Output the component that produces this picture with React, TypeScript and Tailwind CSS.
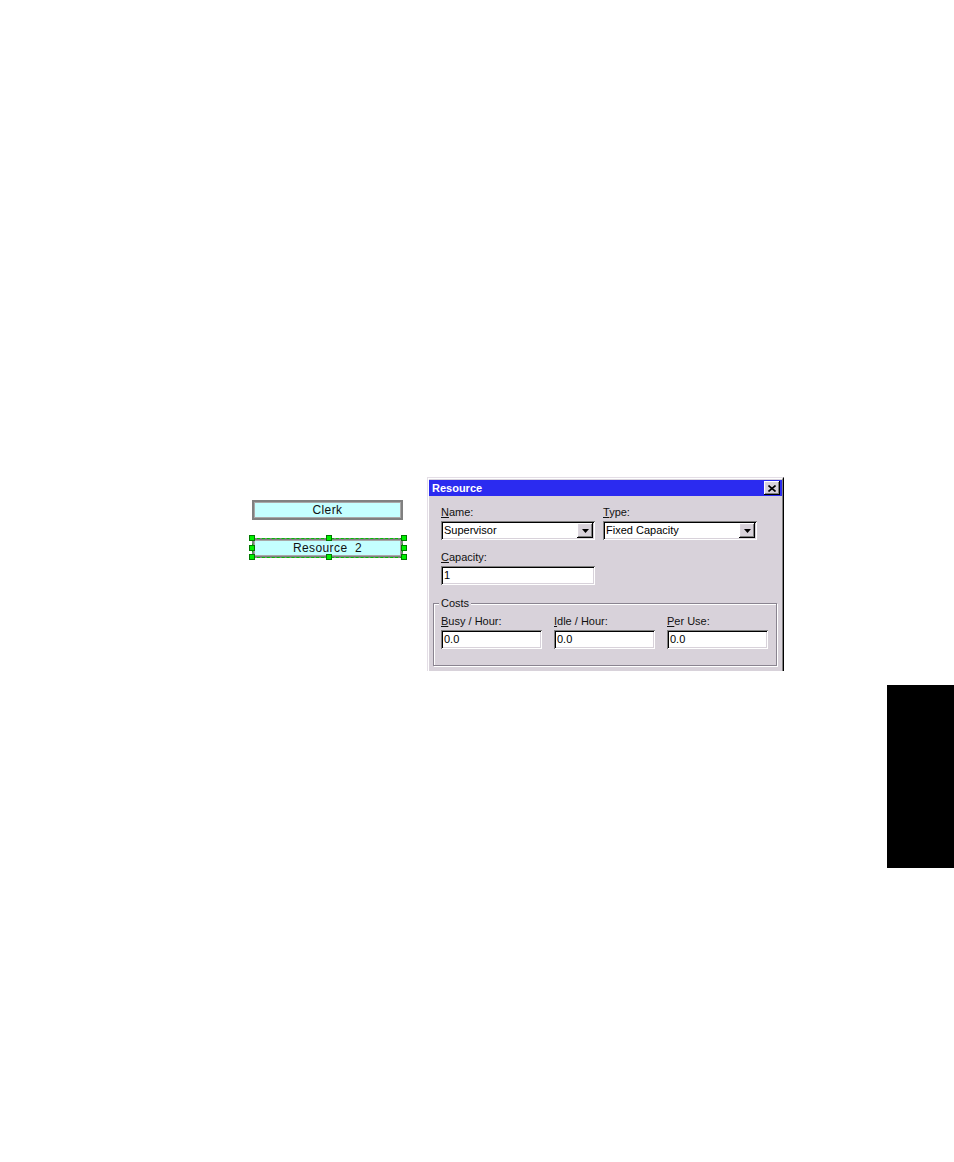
import React from "react";

const sunken =
  "shadow-[inset_1px_1px_0_#808080,inset_-1px_-1px_0_#ffffff,inset_2px_2px_0_#000000,inset_-2px_-2px_0_#d8d2da]";
const raised =
  "shadow-[inset_-1px_-1px_0_#000000,inset_1px_1px_0_#ffffff,inset_-2px_-2px_0_#808080,inset_2px_2px_0_#dcd6de]";

function Label({ u, rest }: { u: string; rest: string }) {
  return (
    <div className="h-[13px] leading-[13px] text-[11px] text-[#111] mb-[2px] whitespace-nowrap">
      <span className="underline underline-offset-[1px]">{u}</span>
      {rest}
    </div>
  );
}

function Field({ value, w, combo }: { value: string; w: string; combo?: boolean }) {
  return (
    <div className={`${w} h-[19px] bg-white ${sunken} flex items-center pl-[3px] text-[11px] text-black`}>
      <span className="leading-[13px] whitespace-nowrap">{value}</span>
      {combo && (
        <div className={`ml-auto mr-[2px] w-[16px] h-[15px] bg-[#d8d2da] ${raised} flex items-center justify-center`}>
          <svg width="7" height="4" viewBox="0 0 7 4">
            <polygon points="0,0 7,0 3.5,4" fill="#000" />
          </svg>
        </div>
      )}
    </div>
  );
}

function Handle({ x, y }: { x: number; y: number }) {
  return (
    <div
      className="absolute w-[6px] h-[6px] bg-[#00f000] border border-[#007a00]"
      style={{ left: x, top: y }}
    />
  );
}

const node =
  "w-[151px] h-[20px] bg-[#c4ffff] border-2 border-[#808080] shadow-[inset_0_0_0_1px_#a8a8a8] flex items-center justify-center text-[12px] text-[#111] tracking-[0.4px]";

export default function App() {
  return (
    <div
      className="relative w-[954px] h-[1162px] bg-white overflow-hidden"
      style={{ fontFamily: '"Liberation Sans", Arial, sans-serif' }}
    >
      <div className="pt-[477px] flex items-start">
        {/* diagram canvas */}
        <div className="ml-[252px] mt-[23px] flex flex-col gap-[18px]">
          <div className={node}>Clerk</div>
          <div className="relative">
            <div className={node}>Resource&nbsp;&nbsp;2</div>
            <div className="absolute inset-0 border border-dashed border-[#00c000]" />
            <Handle x={-3} y={-3} />
            <Handle x={74} y={-3} />
            <Handle x={149} y={-3} />
            <Handle x={-3} y={7} />
            <Handle x={149} y={7} />
            <Handle x={-3} y={16} />
            <Handle x={74} y={16} />
            <Handle x={149} y={16} />
          </div>
        </div>

        {/* dialog */}
        <div className="ml-[24px] w-[357px] h-[194px] border-l border-t border-[#e4dee6] border-r border-r-black bg-[#d8d2da]">
          <div className="h-full border-l border-t border-white border-r border-r-[#808080] pt-[1px]">
            <div className="h-[16px] bg-[#2b2bf0] flex items-center pl-[3px] pr-[2px]">
              <span className="text-[11px] font-bold text-white leading-[13px]">Resource</span>
              <div className={`ml-auto w-[16px] h-[14px] bg-[#d8d2da] ${raised} flex items-center justify-center`}>
                <svg width="8" height="7" viewBox="0 0 8 7">
                  <path d="M0.5 0.5 L7.5 6.5 M7.5 0.5 L0.5 6.5" stroke="#000" strokeWidth="1.6" />
                </svg>
              </div>
            </div>

            <div className="pl-[12px] pt-[10px]">
              <div className="flex gap-[8px]">
                <div>
                  <Label u="N" rest="ame:" />
                  <Field value="Supervisor" w="w-[154px]" combo />
                </div>
                <div>
                  <Label u="T" rest="ype:" />
                  <Field value="Fixed Capacity" w="w-[154px]" combo />
                </div>
              </div>
              <div className="mt-[11px]">
                <Label u="C" rest="apacity:" />
                <Field value="1" w="w-[154px]" />
              </div>
            </div>

            <div className="relative ml-[4px] mt-[18px] w-[344px] h-[63px] border border-[#8a8490] shadow-[1px_1px_0_#ffffff,inset_1px_1px_0_#ffffff]">
              <div className="absolute left-[5px] top-[-7px] px-[2px] bg-[#d8d2da] text-[11px] leading-[13px] text-[#111]">
                Costs
              </div>
              <div className="pl-[7px] pt-[11px] flex gap-[12px]">
                <div>
                  <Label u="B" rest="usy / Hour:" />
                  <Field value="0.0" w="w-[101px]" />
                </div>
                <div>
                  <Label u="I" rest="dle / Hour:" />
                  <Field value="0.0" w="w-[101px]" />
                </div>
                <div>
                  <Label u="P" rest="er Use:" />
                  <Field value="0.0" w="w-[101px]" />
                </div>
              </div>
            </div>
          </div>
        </div>
      </div>

      {/* black thumb tab */}
      <div className="absolute left-[887px] top-[685px] w-[67px] h-[183px] bg-black" />
    </div>
  );
}
